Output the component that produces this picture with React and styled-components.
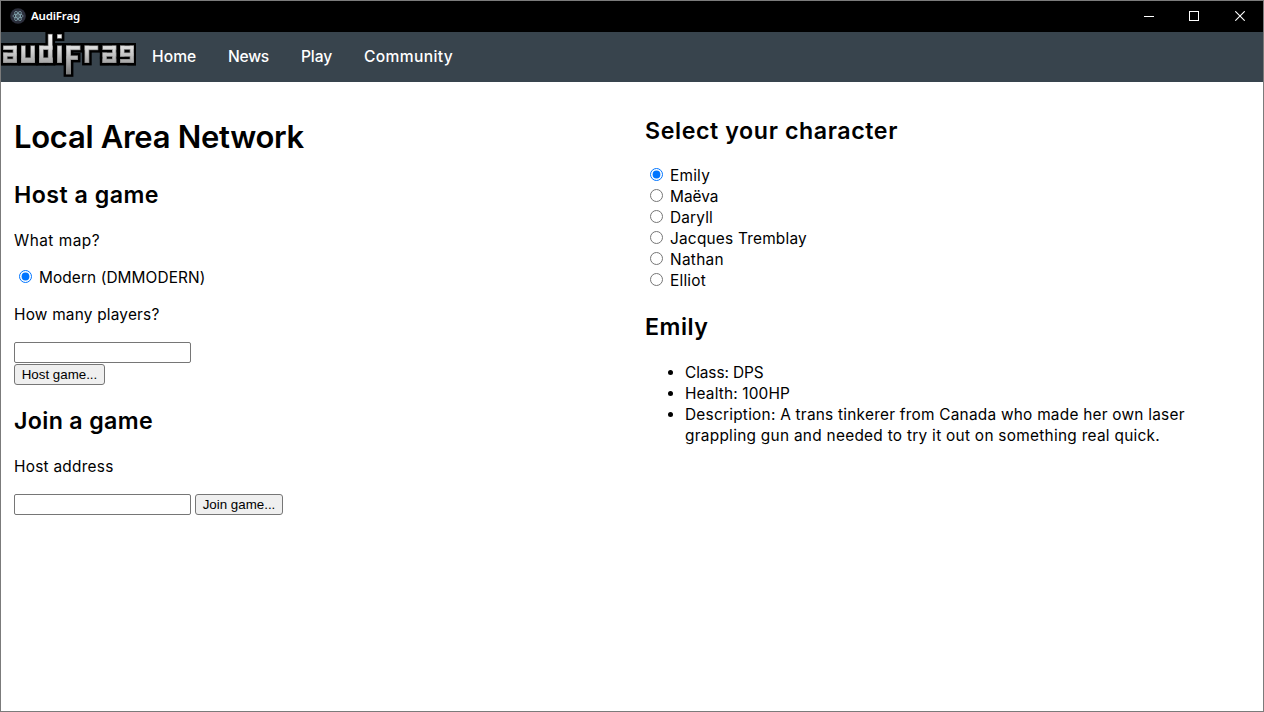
import React, { useState } from 'react';
import styled, { createGlobalStyle } from 'styled-components';

const GlobalStyle = createGlobalStyle`
  *, *::before, *::after { box-sizing: border-box; }
  body { margin: 0; background: #fff; }
`;

const Window = styled.div`
  position: relative;
  display: flex;
  flex-direction: column;
  width: 1264px;
  height: 712px;
  overflow: hidden;
  border: 1px solid #7b7b7b;
  background: #fff;
  color: #000;
  font-family: Inter, 'Noto Sans', sans-serif;
  font-size: 15.4px;
  line-height: 21px;
`;

const EdgeMark = styled.span`
  position: absolute;
  left: -1px;
  top: 357px;
  width: 1px;
  height: 10px;
  background: #333;
`;

const TitleBar = styled.header`
  display: flex;
  align-items: center;
  flex: 0 0 31px;
  padding: 0 0 1px 9px;
  background: #000;
  color: #fff;
`;

const AppIcon = styled.svg`
  width: 16px;
  height: 16px;
  margin-right: 5px;
`;

const AppTitle = styled.span`
  flex: 1;
  font: 600 11.5px/16px 'Noto Sans', sans-serif;
  letter-spacing: -0.17px;
`;

const WindowButton = styled.button`
  display: grid;
  place-items: center;
  width: ${(p) => p.$width || 46}px;
  height: 30px;
  padding: 0;
  border: 0;
  background: none;
  color: #fff;
`;

const NavBar = styled.nav`
  display: flex;
  align-items: flex-start;
  flex: 0 0 50px;
  background: #38444d;
`;

const Logo = styled.svg`
  width: 135px;
  height: 50px;
`;

const NavLink = styled.a`
  width: ${(p) => p.$width + 32}px;
  padding: 14px 16px 0;
  color: #fff;
  font-size: 15.6px;
  font-weight: 500;
  letter-spacing: ${(p) => p.$track}px;
  white-space: nowrap;
`;

const Columns = styled.main`
  display: grid;
  grid-template-columns: 631px 1fr;
  padding-left: 13px;
`;

const Column = styled.section`
  padding-top: 34px;
`;

const PageTitle = styled.h1`
  margin: 0;
  font-size: 31px;
  font-weight: 600;
  line-height: 42px;
  letter-spacing: -0.29px;
`;

const Heading = styled.h2`
  margin: ${(p) => p.$above || 0}px 0 ${(p) => p.$below || 19}px;
  font-size: 23.2px;
  font-weight: 600;
  line-height: 31px;
  letter-spacing: ${(p) => p.$track}px;
`;

const Label = styled.p`
  margin: 0 0 16px;
  letter-spacing: ${(p) => p.$track}px;
`;

const Option = styled.label`
  display: flex;
  height: 21px;
  margin-bottom: ${(p) => p.$below || 0}px;
  letter-spacing: ${(p) => p.$track}px;
`;

const Radio = styled.input.attrs({ type: 'radio' })`
  width: 13px;
  height: 13px;
  margin: 3px 7px 0 5px;
`;

const FieldRow = styled.div`
  display: flex;
  gap: 4px;
  margin-top: ${(p) => p.$above || 0}px;
`;

const TextField = styled.input`
  width: 177px;
  height: 21px;
  padding: 1px 2px;
  border: 1px solid #767676;
  border-radius: 2px;
  background: #fff;
`;

const Button = styled.button`
  width: ${(p) => p.$width}px;
  height: 21px;
  padding: 0;
  border: 1px solid #767676;
  border-radius: 3px;
  background: #efefef;
  color: #000;
  font: 13.333px/17px 'Liberation Sans', Arial, sans-serif;
`;

const Facts = styled.ul`
  margin: 0;
  padding-left: 40px;
`;

const Fact = styled.li`
  letter-spacing: ${(p) => p.$track}px;
  white-space: nowrap;
`;

const TrackedLine = styled.span`
  letter-spacing: ${(p) => p.$track}px;
`;

/* Blocks of the pixel-art logo: x, y, width, height */
const BLOCKS = [
  [2, 14, 14, 4.6], [11.7, 14, 4.3, 17.6], [2, 21, 14, 4.4], [2, 21, 4.6, 10.6], [2, 27.3, 14, 4.3],
  [20, 14, 4.7, 17.6], [29.3, 14, 4.7, 17.6], [20, 26, 14, 5.6],
  [38, 14, 4.7, 17.6], [38, 14, 14, 4.6], [38, 26, 14, 5.6], [46.8, 2.5, 4.9, 29.1],
  [56, 2.7, 5, 4.6], [56, 14, 5, 17.6],
  [65, 14, 5, 29], [65, 14, 14.5, 4.8], [65, 24, 12, 4.6],
  [83.5, 14, 4.8, 17.6], [83.5, 14, 13.8, 4.8],
  [101.3, 14, 14, 4.6], [111, 14, 4.3, 17.6], [101.3, 21, 14, 4.4], [101.3, 21, 4.6, 10.6], [101.3, 27.3, 14, 4.3],
  [119, 14, 14, 4.4], [119, 14, 4.6, 11.4], [128.7, 14, 4.3, 17.6], [119, 21, 14, 4.4], [119, 27.6, 14, 4],
];

function AudiFragLogo() {
  return (
    <Logo viewBox="0 0.6 135 50" role="img" aria-label="audifrag">
      <defs>
        <linearGradient id="metal" gradientUnits="userSpaceOnUse" x1="0" y1="2" x2="0" y2="43">
          <stop offset="0" stopColor="#ffffff" />
          <stop offset="0.35" stopColor="#dcdcdc" />
          <stop offset="0.7" stopColor="#a9a9a9" />
          <stop offset="1" stopColor="#777777" />
        </linearGradient>
      </defs>
      {BLOCKS.map(([x, y, w, h], i) => (
        <rect key={i} x={x - 2.4} y={y - 2.4} width={w + 4.8} height={h + 4.8} fill="#000" />
      ))}
      {BLOCKS.map(([x, y, w, h], i) => (
        <rect key={i} x={x} y={y} width={w} height={h} fill="#858585" />
      ))}
      {BLOCKS.map(([x, y, w, h], i) => (
        <rect key={i} x={x + 0.7} y={y + 0.7} width={w - 1.4} height={h - 1.4} fill="url(#metal)" />
      ))}
    </Logo>
  );
}

const LINKS = [
  { name: 'Home', width: 44, track: 0.05 },
  { name: 'News', width: 41, track: -0.25 },
  { name: 'Play', width: 31, track: -0.13 },
  { name: 'Community', width: 89, track: 0.35 },
];

const CHARACTERS = [
  { name: 'Emily', track: 0.22 },
  { name: 'Maëva', track: 0.01 },
  { name: 'Daryll', track: 0.17 },
  { name: 'Jacques Tremblay', track: 0.22 },
  { name: 'Nathan', track: 0.31 },
  { name: 'Elliot', track: 0.22 },
];

export default function App() {
  const [character, setCharacter] = useState('Emily');
  return (
    <>
      <GlobalStyle />
      <Window>
        <EdgeMark />
        <TitleBar>
          <AppIcon viewBox="0 0 16 16">
            <circle cx="8" cy="8" r="7.8" fill="#2b2e3b" />
            <g fill="none" stroke="#8fb4bd" strokeWidth="0.7">
              <ellipse cx="8" cy="8" rx="5.2" ry="2" />
              <ellipse cx="8" cy="8" rx="5.2" ry="2" transform="rotate(60 8 8)" />
              <ellipse cx="8" cy="8" rx="5.2" ry="2" transform="rotate(120 8 8)" />
            </g>
            <circle cx="8" cy="8" r="0.7" fill="#8fb4bd" />
          </AppIcon>
          <AppTitle>AudiFrag</AppTitle>
          <WindowButton aria-label="Minimize" $width={44}>
            <svg width="10" height="10" shapeRendering="crispEdges">
              <rect x="0" y="5" width="10" height="1" fill="#fff" />
            </svg>
          </WindowButton>
          <WindowButton aria-label="Maximize">
            <svg width="10" height="10" shapeRendering="crispEdges">
              <rect x="0.5" y="0.5" width="9" height="9" fill="none" stroke="#fff" />
            </svg>
          </WindowButton>
          <WindowButton aria-label="Close">
            <svg width="10" height="10">
              <path d="M0.3 0.3 9.7 9.7M9.7 0.3 0.3 9.7" stroke="#fff" strokeWidth="1.1" />
            </svg>
          </WindowButton>
        </TitleBar>
        <NavBar>
          <AudiFragLogo />
          {LINKS.map((l) => (
            <NavLink key={l.name} $width={l.width} $track={l.track}>{l.name}</NavLink>
          ))}
        </NavBar>
        <Columns>
          <Column>
            <PageTitle>Local Area Network</PageTitle>
            <Heading $above={22} $track={0.48}>Host a game</Heading>
            <Label $track={0.48}>What map?</Label>
            <Option $track={0.1} $below={16}>
              <Radio name="map" defaultChecked />
              Modern (DMMODERN)
            </Option>
            <Label $track={0.21}>How many players?</Label>
            <FieldRow $above={17}>
              <TextField />
            </FieldRow>
            <FieldRow $above={1}>
              <Button $width={91}>Host game...</Button>
            </FieldRow>
            <Heading $above={21} $track={0.34}>Join a game</Heading>
            <Label $track={0.26}>Host address</Label>
            <FieldRow $above={17}>
              <TextField />
              <Button $width={88}>Join game...</Button>
            </FieldRow>
          </Column>
          <Column>
            <Heading $below={18} $track={0.6}>Select your character</Heading>
            {CHARACTERS.map((c) => (
              <Option key={c.name} $track={c.track}>
                <Radio
                  name="character"
                  checked={character === c.name}
                  onChange={() => setCharacter(c.name)}
                />
                {c.name}
              </Option>
            ))}
            <Heading $above={21} $track={0.52}>{character}</Heading>
            <Facts>
              <Fact $track={-0.09}>Class: DPS</Fact>
              <Fact $track={0.15}>Health: 100HP</Fact>
              <Fact $track={0.24}>
                Description: A trans tinkerer from Canada who made her own laser
                <br />
                <TrackedLine $track={0.28}>
                  grappling gun and needed to try it out on something real quick.
                </TrackedLine>
              </Fact>
            </Facts>
          </Column>
        </Columns>
      </Window>
    </>
  );
}
